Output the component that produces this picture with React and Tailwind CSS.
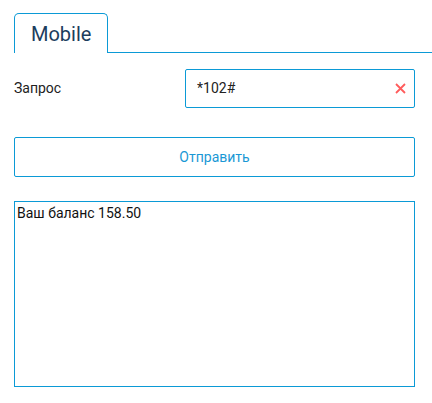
import React, { useState } from "react";

const App = () => {
  const [query, setQuery] = useState("*102#");
  const [result] = useState("Ваш баланс 158.50");

  return (
    <div className="min-h-screen bg-white pt-[13px] font-['Roboto','Liberation_Sans',sans-serif] text-[#222]">
      {/* Tabs */}
      <div className="flex pl-[14px]">
        <div className="h-[40px] border border-b-0 border-[#0b9ad6] rounded-t-[5px] px-[16px] flex items-center text-[20px] text-[#1c3d5e] bg-white">
          Mobile
        </div>
        <div className="flex-1 h-[40px] border-b border-[#0b9ad6]"></div>
      </div>

      {/* Form */}
      <div className="pl-[14px] w-[415px] pt-[16px]">
        <div className="flex items-center">
          <label className="w-[171px] text-[14px] text-[#222]">Запрос</label>
          <div className="flex-1 h-[39px] border border-[#0b9ad6] rounded-[2px] flex items-center pl-[11px] pr-[8px]">
            <input
              value={query}
              onChange={(e) => setQuery(e.target.value)}
              className="flex-1 min-w-0 outline-none text-[14px] text-[#222] bg-transparent"
            />
            <button onClick={() => setQuery("")} className="w-[12px] h-[12px] flex items-center justify-center">
              <svg width="11" height="11" viewBox="0 0 11 11">
                <path d="M1 1L10 10M10 1L1 10" stroke="#ff5c5c" strokeWidth="1.8" />
              </svg>
            </button>
          </div>
        </div>

        <button className="mt-[29px] w-full h-[40px] border border-[#0b9ad6] rounded-[2px] text-[14px] text-[#1a98d5] bg-white">
          Отправить
        </button>

        <textarea
          readOnly
          value={result}
          className="mt-[24px] block w-full h-[186px] border border-[#0b9ad6] p-[2px] text-[14px] leading-[18px] text-[#111] resize-none outline-none"
        />
      </div>
    </div>
  );
};

export default App;
